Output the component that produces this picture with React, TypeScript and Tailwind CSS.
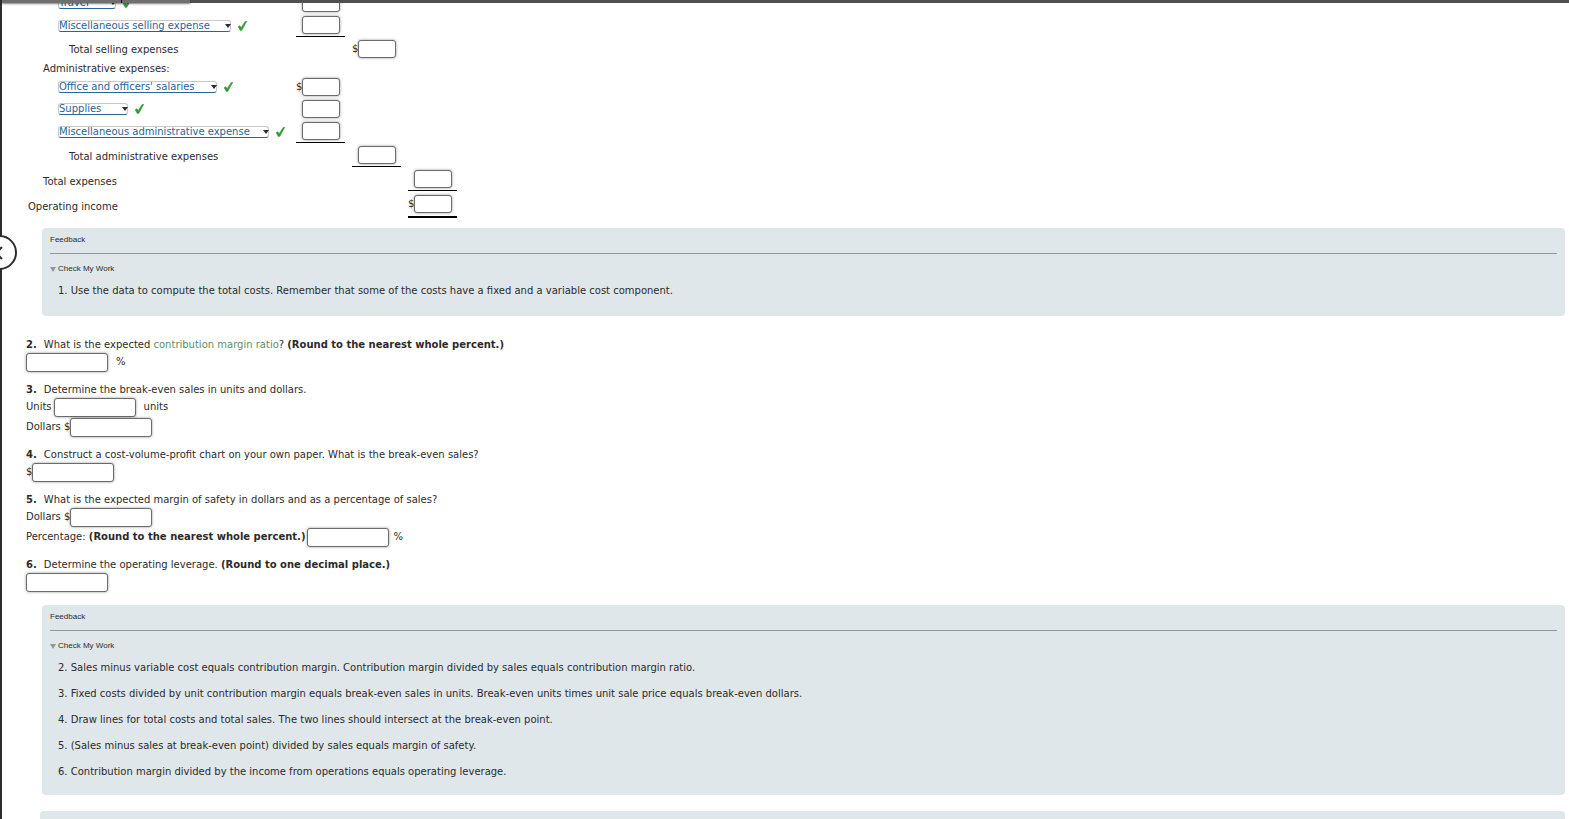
import { useId } from "react";
import type { ReactNode } from "react";

type Column = 0 | 1 | 2;

interface StatementRow {
  label: string;
  kind: "select" | "text";
  indent: string;
  height: string;
  width?: string;
  column?: Column;
  dollar?: boolean;
  rule?: "single" | "double";
}

const rows: StatementRow[] = [
  { label: "Travel", kind: "select", indent: "pl-8", height: "h-[22px]", width: "w-[58px]", column: 0 },
  { label: "Miscellaneous selling expense", kind: "select", indent: "pl-8", height: "h-6", width: "w-[173px]", column: 0, rule: "single" },
  { label: "Total selling expenses", kind: "text", indent: "pl-[43px]", height: "h-6", column: 1, dollar: true },
  { label: "Administrative expenses:", kind: "text", indent: "pl-[17px]", height: "h-[14px]" },
  { label: "Office and officers' salaries", kind: "select", indent: "pl-8", height: "h-[22px]", width: "w-[159px]", column: 0, dollar: true },
  { label: "Supplies", kind: "select", indent: "pl-8", height: "h-[22px]", width: "w-[70px]", column: 0 },
  { label: "Miscellaneous administrative expense", kind: "select", indent: "pl-8", height: "h-6", width: "w-[211px]", column: 0, rule: "single" },
  { label: "Total administrative expenses", kind: "text", indent: "pt-[2px] pl-[43px]", height: "h-6", column: 1, rule: "single" },
  { label: "Total expenses", kind: "text", indent: "pt-[2px] pl-[17px]", height: "h-[25px]", column: 2, rule: "single" },
  { label: "Operating income", kind: "text", indent: "pt-[2px] pl-[2px]", height: "h-[25px]", column: 2, dollar: true, rule: "double" },
];

const field =
  "rounded-[3px] border border-[#6b6b6b] bg-white px-1 text-[10px] shadow-[0_0_3px_rgba(0,0,0,0.4)] outline-none";

export default function App() {
  return (
    <div className="relative flex h-screen flex-col overflow-hidden bg-white font-['DejaVu_Sans',Verdana,sans-serif] text-[10px] leading-[18px] text-[#2b2b2b]">
      <TopEdge />
      <div className="flex min-h-0 flex-1">
        <div className="w-[2px] shrink-0 bg-[#2d2d2f]" />
        <main className="-mt-[11px] flex-1 pr-1 pl-6">
          <table className="border-collapse">
            <tbody>
              {rows.map((row) => (
                <StatementLine key={row.label} row={row} />
              ))}
            </tbody>
          </table>

          <Feedback
            className="mt-[10px] h-[88px]"
            items={[
              "1. Use the data to compute the total costs. Remember that some of the costs have a fixed and a variable cost component.",
            ]}
          />

          <Question className="mt-5" number={2}>
            What is the expected{" "}
            <a href="#ratio" className="text-[#5b8f66]">
              contribution margin ratio
            </a>
            ? <b>(Round to the nearest whole percent.)</b>
          </Question>
          <Answer name="Contribution margin ratio" after="%" wide />

          <Question number={3}>Determine the break-even sales in units and dollars.</Question>
          <Answer name="Break-even units" before={<span className="mr-[2px]">Units</span>} after="units" wide />
          <Answer name="Break-even dollars" before="Dollars $" />

          <Question number={4}>
            Construct a cost-volume-profit chart on your own paper. What is the break-even sales?
          </Question>
          <Answer name="Break-even sales" before="$" />

          <Question number={5}>
            What is the expected margin of safety in dollars and as a percentage of sales?
          </Question>
          <Answer name="Margin of safety dollars" before="Dollars $" />
          <Answer
            name="Margin of safety percentage"
            before={
              <span className="mr-[2px]">
                Percentage: <b>(Round to the nearest whole percent.)</b>
              </span>
            }
            after="%"
          />

          <Question number={6}>
            Determine the operating leverage. <b>(Round to one decimal place.)</b>
          </Question>
          <Answer name="Operating leverage" />

          <Feedback
            className="mt-3 h-[190px]"
            items={[
              "2. Sales minus variable cost equals contribution margin. Contribution margin divided by sales equals contribution margin ratio.",
              "3. Fixed costs divided by unit contribution margin equals break-even sales in units. Break-even units times unit sale price equals break-even dollars.",
              "4. Draw lines for total costs and total sales. The two lines should intersect at the break-even point.",
              "5. (Sales minus sales at break-even point) divided by sales equals margin of safety.",
              "6. Contribution margin divided by the income from operations equals operating leverage.",
            ]}
          />
          <div className="mt-4 ml-[14px] h-10 rounded bg-[#dfe7ea]" />
        </main>
      </div>
      <DrawerButton />
    </div>
  );
}

function StatementLine({ row }: { row: StatementRow }) {
  const id = useId();
  return (
    <tr className={row.height}>
      <th
        scope="row"
        className={`w-[270px] text-left font-normal ${row.column === undefined ? "leading-[14px]" : ""} ${row.indent}`}
      >
        {row.kind === "select" ? (
          <span className="flex items-center gap-[7px]">
            <span className={`relative flex ${row.width}`}>
              <select
                id={id}
                aria-label={row.label}
                className="h-3 w-full appearance-none rounded-[3px] border border-[#c9c9c9] border-b-[#2a6496] bg-white p-0 text-[10px] leading-[10px] text-[#2a6496]"
              >
                <option>{row.label}</option>
              </select>
              <svg viewBox="0 0 6 4" className="pointer-events-none absolute top-1 right-0 h-1 w-[6px]" aria-hidden="true">
                <path d="M0 0h6L3 4z" fill="#2b2b2b" />
              </svg>
            </span>
            <Check />
          </span>
        ) : (
          row.label
        )}
      </th>
      {([0, 1, 2] as Column[]).map((column) => (
        <td key={column} className="p-0 pr-[7px] align-top">
          {row.column === column ? <Amount row={row} /> : <div className="w-[49px]" />}
        </td>
      ))}
    </tr>
  );
}

function Amount({ row }: { row: StatementRow }) {
  const rule =
    row.rule === "single"
      ? "h-[23px] border-b border-black"
      : row.rule === "double"
        ? "h-[25px] border-b-2 border-black"
        : "h-[22px]";
  return (
    <div className={`flex w-[49px] pt-[2px] ${rule}`}>
      <span className="w-[6px]">{row.dollar ? "$" : ""}</span>
      <input aria-label={row.label} className={`h-[18px] w-[38px] shrink-0 ${field}`} />
    </div>
  );
}

function Check() {
  return (
    <svg viewBox="0 0 9 10" className="h-[10px] w-[9px] shrink-0" aria-hidden="true">
      <path d="M0 5.8 1.8 4.6 3.2 6.4 7 .4 9 0 4 9.2 2.4 9.8z" fill="#3a9b35" stroke="#3a9b35" strokeWidth="0.4" />
    </svg>
  );
}

function Question({ number, className = "mt-2", children }: { number: number; className?: string; children: ReactNode }) {
  return (
    <p className={`leading-[17px] ${className}`}>
      <b className="mr-[7px]">{number}.</b>
      {children}
    </p>
  );
}

function Answer({ name, before, after, wide }: { name: string; before?: ReactNode; after?: string; wide?: boolean }) {
  return (
    <label className="flex h-5 items-start">
      {before}
      <input aria-label={name} className={`h-[19px] w-[82px] ${field}`} />
      {after ? <span className={wide ? "ml-2" : "ml-1"}>{after}</span> : null}
    </label>
  );
}

function Feedback({ items, className }: { items: string[]; className: string }) {
  return (
    <section className={`ml-4 rounded bg-[#dfe7ea] px-2 pt-[3px] ${className}`}>
      <h2 className="border-b border-[#8f999c] pb-1 font-['Liberation_Sans',Arial,sans-serif] text-[8px]">Feedback</h2>
      <button type="button" className="mt-[6px] flex items-center gap-[2px] font-['Liberation_Sans',Arial,sans-serif] text-[8px]">
        <svg viewBox="0 0 6 5" className="h-[5px] w-[6px]" aria-hidden="true">
          <path d="M0 0h6L3 5z" fill="#8f999c" />
        </svg>
        Check My Work
      </button>
      <div className="mt-1 flex flex-col gap-2 pl-2">
        {items.map((item) => (
          <p key={item}>{item}</p>
        ))}
      </div>
    </section>
  );
}

function TopEdge() {
  return (
    <div className="relative z-10 flex h-[3px] shrink-0 bg-[#505050]">
      <div className="w-[2px] bg-[#2d2d2f]" />
      <div className="w-[120px] border-r border-black bg-[#6f6f6f] shadow-[0_1px_2px_rgba(0,0,0,0.5)]" />
      <div className="w-[68px] bg-[#6f6f6f] shadow-[0_1px_2px_rgba(0,0,0,0.5)]" />
    </div>
  );
}

function DrawerButton() {
  return (
    <button
      type="button"
      aria-label="Open navigation"
      className="absolute top-[235px] -left-[18px] flex size-[35px] items-center justify-end rounded-full border-2 border-[#2d2d2f] bg-white pr-3"
    >
      <svg viewBox="0 0 8 14" className="h-[14px] w-2 shrink-0" aria-hidden="true">
        <path d="M7 1 1 7l6 6" fill="none" stroke="#2d2d2f" strokeWidth="2" />
      </svg>
    </button>
  );
}
